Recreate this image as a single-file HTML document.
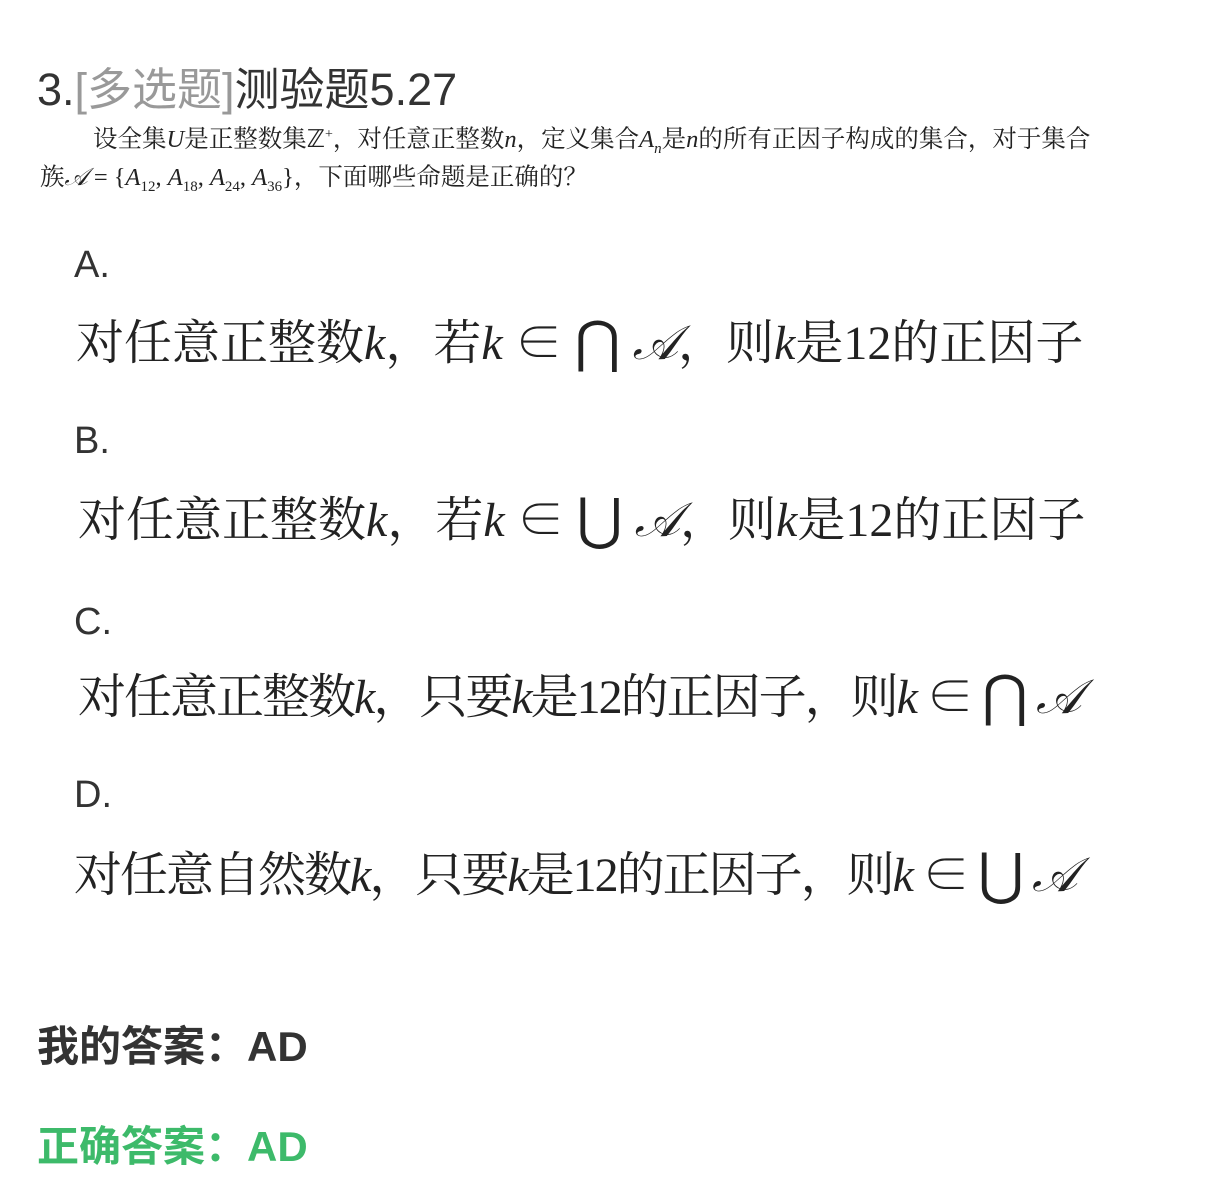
<!DOCTYPE html>
<html><head><meta charset="utf-8"><style>
body{margin:0;width:1215px;height:1192px;background:#fff;position:relative;overflow:hidden;color:#222}
.a{position:absolute;white-space:nowrap;line-height:1}
.t{font-family:"Liberation Sans","Noto Sans CJK SC",sans-serif;font-size:45px;color:#333}
.g{color:#999}
.p{font-family:"Liberation Serif","Noto Serif CJK SC",serif;font-size:24.5px;color:#222}
.l{font-family:"Liberation Sans","Noto Sans CJK SC",sans-serif;font-size:38px;color:#333}
.o{font-family:"Liberation Serif","Noto Serif CJK SC",serif;font-size:48px;color:#222}
i{font-style:italic}
.big{font-size:56px;font-family:"DejaVu Serif",serif;position:relative;top:2px}
.cal{font-family:"DejaVu Serif",serif;font-style:italic}
.ans{font-family:"Liberation Sans","Noto Sans CJK SC",sans-serif;font-size:42px;font-weight:bold;color:#333}
.gr{color:#3dba6a}
sub{font-size:15px}
</style></head><body>
<div class="a t" style="left:37px;top:67px">3.<span class="g">[多选题]</span>测验题5.27</div>
<div class="a p" style="left:93px;top:128px">设全集<i>U</i>是正整数集ℤ<sup style="font-size:14px">+</sup>，对任意正整数<i>n</i>，定义集合<i>A<sub>n</sub></i>是<i>n</i>的所有正因子构成的集合，对于集合</div>
<div class="a p" style="left:40px;top:165px">族<span class="cal">𝒜</span> = {<i>A</i><sub>12</sub>, <i>A</i><sub>18</sub>, <i>A</i><sub>24</sub>, <i>A</i><sub>36</sub>}，下面哪些命题是正确的？</div>

<div class="a l" style="left:74px;top:246px">A.</div>
<div class="a o" style="left:76px;top:313px">对任意正整数<i>k</i>，若<i>k</i> ∈ <span class="big">⋂</span> <span class="cal">𝒜</span>，则<i>k</i>是12的正因子</div>
<div class="a l" style="left:74px;top:422px">B.</div>
<div class="a o" style="left:78px;top:490px">对任意正整数<i>k</i>，若<i>k</i> ∈ <span class="big">⋃</span> <span class="cal">𝒜</span>，则<i>k</i>是12的正因子</div>
<div class="a l" style="left:74px;top:603px">C.</div>
<div class="a o" style="left:78px;top:667px;letter-spacing:-2px">对任意正整数<i>k</i>，只要<i>k</i>是12的正因子，则<i>k</i> ∈ <span class="big">⋂</span> <span class="cal">𝒜</span></div>
<div class="a l" style="left:74px;top:776px">D.</div>
<div class="a o" style="left:74px;top:845px;letter-spacing:-2px">对任意自然数<i>k</i>，只要<i>k</i>是12的正因子，则<i>k</i> ∈ <span class="big">⋃</span> <span class="cal">𝒜</span></div>

<div class="a ans" style="left:37px;top:1026px">我的答案：AD</div>
<div class="a ans gr" style="left:37px;top:1126px">正确答案：AD</div>
</body></html>
